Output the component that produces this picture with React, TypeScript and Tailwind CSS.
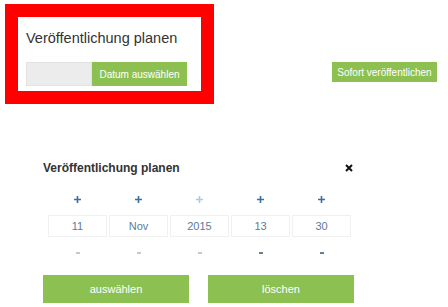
import React from "react";

const cols = [
  { v: "11", plus: "#3d6f9e", minus: "#c8c8c8" },
  { v: "Nov", plus: "#3d6f9e", minus: "#c8c8c8" },
  { v: "2015", plus: "#b4c8da", minus: "#c8c8c8" },
  { v: "13", plus: "#3d6f9e", minus: "#6b7f92" },
  { v: "30", plus: "#3d6f9e", minus: "#6b7f92" },
];

function Plus({ color }: { color: string }) {
  return (
    <svg width="7" height="7" viewBox="0 0 7 7">
      <path d="M3.5 0V7M0 3.5H7" stroke={color} strokeWidth="1.6" />
    </svg>
  );
}

export default function App() {
  return (
    <div className="w-[448px] h-[307px] bg-white font-['Liberation_Sans',Arial,sans-serif] overflow-hidden">
      <div className="flex items-start">
        <div className="ml-[5px] mt-[4px] w-[209px] h-[100px] border-[13px] border-[#ff0000] bg-white px-[8px] pt-[12px]">
          <div className="text-[14.5px] leading-[18px] text-[#333]">Veröffentlichung planen</div>
          <div className="mt-[15px] flex h-[24px]">
            <div className="w-[66px] bg-[#ececec] border border-[#e2e2e2]"></div>
            <button className="w-[95px] bg-[#8cc152] text-white text-[10px] flex items-center justify-center">
              Datum auswählen
            </button>
          </div>
        </div>
        <button className="ml-[118px] mt-[62px] w-[105px] h-[20px] bg-[#8cc152] text-white text-[10px] flex items-center justify-center">
          Sofort veröffentlichen
        </button>
      </div>
      <div className="pl-[43px]">
        <div className="mt-[56px] w-[311px] h-[16px] flex items-center justify-between">
          <div className="text-[12px] font-bold leading-[16px] text-[#333]">Veröffentlichung planen</div>
          <svg width="8" height="8" viewBox="0 0 8 8" className="mr-[1px]">
            <path d="M1 1L7 7M7 1L1 7" stroke="#111" strokeWidth="2" />
          </svg>
        </div>
        <div className="ml-[5px] mt-[20px] grid grid-cols-[repeat(5,59px)] gap-x-[2px] h-[7px]">
          {cols.map((c, i) => (
            <div key={i} className="flex justify-center">
              <Plus color={c.plus} />
            </div>
          ))}
        </div>
        <div className="ml-[5px] mt-[12px] grid grid-cols-[repeat(5,59px)] gap-x-[2px] h-[22px]">
          {cols.map((c, i) => (
            <div key={i} className="border border-[#f0f0f0] flex items-center justify-center text-[11px] text-[#5b7b9b]">
              {c.v}
            </div>
          ))}
        </div>
        <div className="ml-[5px] mt-[15px] grid grid-cols-[repeat(5,59px)] gap-x-[2px] h-[2px]">
          {cols.map((c, i) => (
            <div key={i} className="flex justify-center">
              <div className="w-[4px] h-[2px]" style={{ backgroundColor: c.minus }}></div>
            </div>
          ))}
        </div>
        <div className="mt-[21px] flex gap-[19px]">
          <button className="w-[146px] h-[28px] bg-[#8cc152] text-white text-[11px] flex items-center justify-center">
            auswählen
          </button>
          <button className="w-[146px] h-[28px] bg-[#8cc152] text-white text-[11px] flex items-center justify-center">
            löschen
          </button>
        </div>
      </div>
    </div>
  );
}
